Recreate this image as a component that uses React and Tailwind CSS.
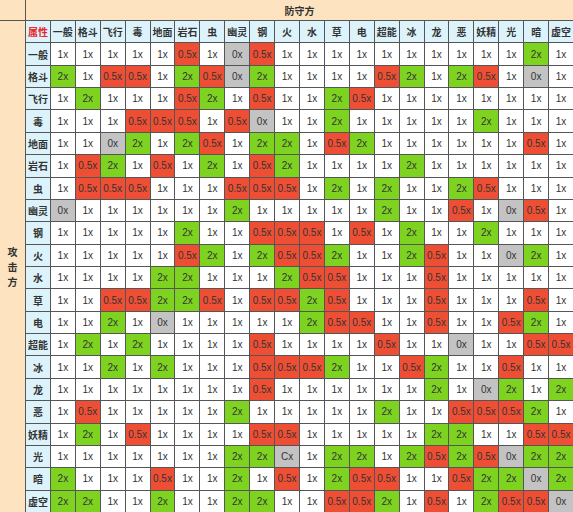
const types = ['一般', '格斗', '飞行', '毒', '地面', '岩石', '虫', '幽灵', '钢', '火', '水', '草', '电', '超能', '冰', '龙', '恶', '妖精', '光', '暗', '虚空'];

// attack rows x defence columns
const chart = [
    '1x 1x 1x 1x 1x 0.5x 1x 0x 0.5x 1x 1x 1x 1x 1x 1x 1x 1x 1x 1x 2x 1x',
    '2x 1x 0.5x 0.5x 1x 2x 0.5x 0x 2x 1x 1x 1x 1x 0.5x 2x 1x 2x 0.5x 1x 0x 1x',
    '1x 2x 1x 1x 1x 0.5x 2x 1x 0.5x 1x 1x 2x 0.5x 1x 1x 1x 1x 1x 1x 1x 1x',
    '1x 1x 1x 0.5x 0.5x 0.5x 1x 0.5x 0x 1x 1x 2x 1x 1x 1x 1x 1x 2x 1x 1x 1x',
    '1x 1x 0x 2x 1x 2x 0.5x 1x 2x 2x 1x 0.5x 2x 1x 1x 1x 1x 1x 1x 0.5x 1x',
    '1x 0.5x 2x 1x 0.5x 1x 2x 1x 0.5x 2x 1x 1x 1x 1x 2x 1x 1x 1x 1x 1x 1x',
    '1x 0.5x 0.5x 0.5x 1x 1x 1x 0.5x 0.5x 0.5x 1x 2x 1x 2x 1x 1x 2x 0.5x 1x 1x 1x',
    '0x 1x 1x 1x 1x 1x 1x 2x 1x 1x 1x 1x 1x 2x 1x 1x 0.5x 1x 0x 0.5x 1x',
    '1x 1x 1x 1x 1x 2x 1x 1x 0.5x 0.5x 0.5x 1x 0.5x 1x 2x 1x 1x 2x 1x 1x 1x',
    '1x 1x 1x 1x 1x 0.5x 2x 1x 2x 0.5x 0.5x 2x 1x 1x 2x 0.5x 1x 1x 0x 2x 1x',
    '1x 1x 1x 1x 2x 2x 1x 1x 1x 2x 0.5x 0.5x 1x 1x 1x 0.5x 1x 1x 1x 1x 1x',
    '1x 1x 0.5x 0.5x 2x 2x 0.5x 1x 0.5x 0.5x 2x 0.5x 1x 1x 1x 0.5x 1x 1x 1x 0.5x 1x',
    '1x 1x 2x 1x 0x 1x 1x 1x 1x 1x 2x 0.5x 0.5x 1x 1x 0.5x 1x 1x 0.5x 2x 1x',
    '1x 2x 1x 2x 1x 1x 1x 1x 0.5x 1x 1x 1x 1x 0.5x 1x 1x 0x 1x 1x 0.5x 0.5x',
    '1x 1x 2x 1x 2x 1x 1x 1x 0.5x 0.5x 0.5x 2x 1x 1x 0.5x 2x 1x 1x 0.5x 1x 1x',
    '1x 1x 1x 1x 1x 1x 1x 1x 0.5x 1x 1x 1x 1x 1x 1x 2x 1x 0x 2x 1x 2x',
    '1x 0.5x 1x 1x 1x 1x 1x 2x 1x 1x 1x 1x 1x 2x 1x 1x 0.5x 0.5x 0.5x 2x 1x',
    '1x 2x 1x 0.5x 1x 1x 1x 1x 0.5x 0.5x 1x 1x 1x 1x 1x 2x 2x 1x 1x 0.5x 0.5x',
    '1x 1x 1x 1x 1x 1x 1x 2x 2x Cx 1x 2x 2x 1x 2x 0.5x 2x 0.5x 0x 2x 2x',
    '2x 1x 1x 1x 0.5x 1x 1x 2x 1x 0.5x 1x 2x 0.5x 0.5x 1x 1x 0.5x 2x 2x 0x 2x',
    '2x 2x 1x 1x 2x 1x 1x 2x 2x 1x 1x 0.5x 0.5x 2x 1x 0.5x 1x 2x 0.5x 0.5x 0x',
].map(row => row.split(' '));

const cellColor = (v) => {
    if (v === '2x') return 'bg-[#7ed321]';
    if (v === '0.5x') return 'bg-[#ee4f34]';
    if (v === '1x') return 'bg-white';
    return 'bg-[#c3c3c3]';
};

const cjk = { fontFamily: '"Noto Sans CJK SC", "Noto Sans", sans-serif' };

export default function App() {
    return (
        <div className="w-[573px] h-[512px] overflow-hidden bg-[#fde3bf]">
            <div
                className="grid w-[573px] h-[512px] gap-px bg-[#555555] grid-cols-[25px_repeat(22,1fr)] grid-rows-[20px_repeat(22,1fr)] text-[#333333]"
                style={cjk}
            >
                {/* corner */}
                <div className="bg-[#fde3bf]" />
                {/* 防守方 */}
                <div className="col-span-22 bg-[#fde3bf] flex items-center justify-center text-[10px] font-bold">
                    防守方
                </div>
                {/* 攻击方 */}
                <div className="row-span-22 bg-[#fde3bf] flex items-center justify-center text-[10px] font-bold leading-[15px] text-center">
                    攻<br />击<br />方
                </div>

                {/* header row */}
                <div className="bg-[#ddf3fc] flex items-center justify-center text-[10px] font-bold text-[#e8262b]">
                    属性
                </div>
                {types.map(t => (
                    <div key={t} className="bg-[#ddf3fc] flex items-center justify-center text-[10px] font-bold whitespace-nowrap">
                        {t}
                    </div>
                ))}

                {/* data rows */}
                {chart.map((row, i) => (
                    <div key={types[i]} className="contents">
                        <div className="bg-[#ddf3fc] flex items-center justify-center text-[10px] font-bold whitespace-nowrap">
                            {types[i]}
                        </div>
                        {row.map((v, j) => (
                            <div
                                key={j}
                                className={`${cellColor(v)} flex items-center justify-center text-[10px] whitespace-nowrap font-['Liberation_Sans',sans-serif]`}
                            >
                                {v}
                            </div>
                        ))}
                    </div>
                ))}
            </div>
        </div>
    );
}
